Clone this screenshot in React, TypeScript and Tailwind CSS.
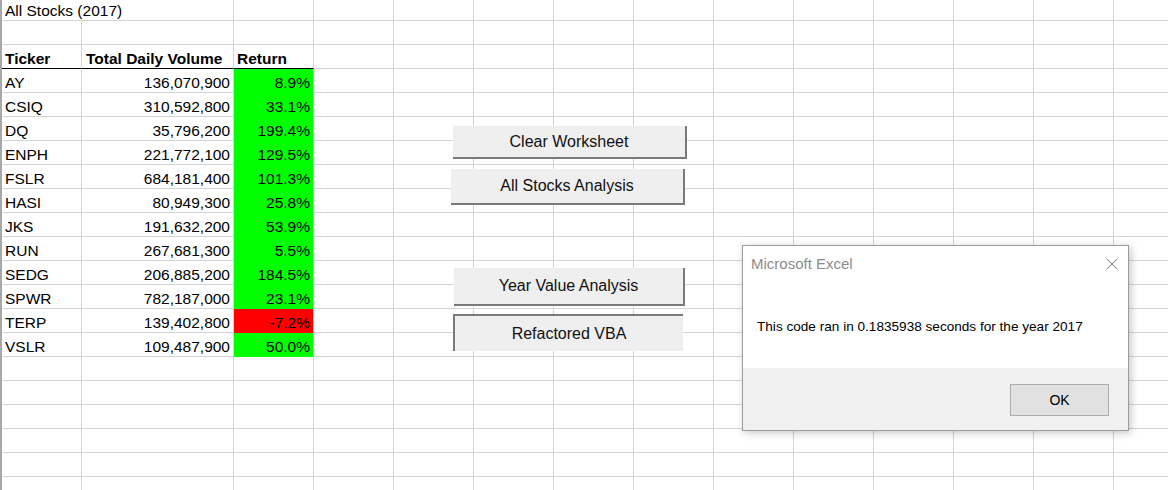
import React from 'react';

type Stock = {
    ticker: string;
    volume: string;
    ret: string;
    negative?: boolean;
};

const stocks: Stock[] = [
    { ticker: 'AY', volume: '136,070,900', ret: '8.9%' },
    { ticker: 'CSIQ', volume: '310,592,800', ret: '33.1%' },
    { ticker: 'DQ', volume: '35,796,200', ret: '199.4%' },
    { ticker: 'ENPH', volume: '221,772,100', ret: '129.5%' },
    { ticker: 'FSLR', volume: '684,181,400', ret: '101.3%' },
    { ticker: 'HASI', volume: '80,949,300', ret: '25.8%' },
    { ticker: 'JKS', volume: '191,632,200', ret: '53.9%' },
    { ticker: 'RUN', volume: '267,681,300', ret: '5.5%' },
    { ticker: 'SEDG', volume: '206,885,200', ret: '184.5%' },
    { ticker: 'SPWR', volume: '782,187,000', ret: '23.1%' },
    { ticker: 'TERP', volume: '139,402,800', ret: '-7.2%', negative: true },
    { ticker: 'VSLR', volume: '109,487,900', ret: '50.0%' },
];

// columns D.. to the right edge, all 80px wide
const emptyCols = Array.from({ length: 11 });
const emptyRows = Array.from({ length: 8 });

const cell = 'h-full shrink-0 border-r border-b border-[#d4d4d4] flex items-end leading-[18px]';

const EmptyCells = () => (
    <>
        {emptyCols.map((_, i) => (
            <div key={i} className={`${cell} w-[80px]`} />
        ))}
    </>
);

const SheetButton = ({ label, className }: { label: string; className: string }) => (
    <div
        className={`absolute flex items-center justify-center bg-[#efefef] text-[16px] leading-[18px] text-[#111] ${className}`}
    >
        {label}
    </div>
);

const App: React.FC = () => {
    return (
        <div
            className="relative w-[1168px] h-[490px] overflow-hidden bg-white text-black"
            style={{ fontFamily: '"Liberation Sans", Arial, sans-serif' }}
        >
            {/* worksheet */}
            <div className="flex flex-col border-l-2 border-[#a8a8a8] text-[15.5px]">
                {/* row 1: title spills over into column B */}
                <div className="flex h-[21px]">
                    <div className={`${cell} w-[232px] pl-[3px]`}>All Stocks (2017)</div>
                    <div className={`${cell} w-[80px]`} />
                    <EmptyCells />
                </div>

                {/* row 2 */}
                <div className="flex h-[24px]">
                    <div className={`${cell} w-[80px]`} />
                    <div className={`${cell} w-[152px]`} />
                    <div className={`${cell} w-[80px]`} />
                    <EmptyCells />
                </div>

                {/* header */}
                <div className="flex h-[24px] font-bold">
                    <div className={`${cell} w-[80px] pl-[3px] !border-b-black`}>Ticker</div>
                    <div className={`${cell} w-[152px] pl-[4px] !border-b-black`}>Total Daily Volume</div>
                    <div className={`${cell} w-[80px] pl-[3px] !border-b-black`}>Return</div>
                    <EmptyCells />
                </div>

                {stocks.map((s) => (
                    <div key={s.ticker} className="flex h-[24px]">
                        <div className={`${cell} w-[80px] pl-[3px]`}>{s.ticker}</div>
                        <div className={`${cell} w-[152px] justify-end pr-[3px]`}>{s.volume}</div>
                        <div
                            className={`${cell} w-[80px] justify-end pr-[3px] ${
                                s.negative ? 'bg-[#ff0000] !border-b-[#ff0000]' : 'bg-[#00ff00] !border-b-[#00ff00]'
                            }`}
                        >
                            {s.ret}
                        </div>
                        <EmptyCells />
                    </div>
                ))}

                {emptyRows.map((_, r) => (
                    <div key={r} className="flex h-[24px]">
                        <div className={`${cell} w-[80px]`} />
                        <div className={`${cell} w-[152px]`} />
                        <div className={`${cell} w-[80px]`} />
                        <EmptyCells />
                    </div>
                ))}
            </div>

            {/* form buttons sitting on the sheet */}
            <SheetButton
                label="Clear Worksheet"
                className="left-[453px] top-[126px] w-[234px] h-[33px] border-b-2 border-r-2 border-[#7a7a7a]"
            />
            <SheetButton
                label="All Stocks Analysis"
                className="left-[451px] top-[169px] w-[234px] h-[36px] border-b-2 border-r-2 border-[#7a7a7a]"
            />
            <SheetButton
                label="Year Value Analysis"
                className="left-[454px] top-[268px] w-[231px] h-[38px] border-b-2 border-r-2 border-[#7a7a7a]"
            />
            <SheetButton
                label="Refactored VBA"
                className="left-[453px] top-[314px] w-[230px] h-[37px] border-t-2 border-l-2 border-[#7a7a7a]"
            />

            {/* message box */}
            <div
                className="absolute left-[742px] top-[245px] w-[387px] h-[186px] flex flex-col bg-white border border-[#9c9c9c] shadow-[2px_2px_8px_rgba(0,0,0,0.22)]"
            >
                <div className="flex flex-col h-[122px]">
                    <div className="mt-[8px] flex h-[20px] items-center justify-between pl-[8px] pr-[10px]">
                        <span className="text-[15px] leading-[20px] text-[#8c8c8c]">Microsoft Excel</span>
                        <svg width="12" height="12" viewBox="0 0 12 12" className="text-[#7a7a7a]">
                            <path d="M0.5 0.5 L11.5 11.5 M11.5 0.5 L0.5 11.5" stroke="currentColor" strokeWidth="1" fill="none" />
                        </svg>
                    </div>
                    <div className="mt-[44px] pl-[14px] text-[13.6px] leading-[18px] text-black">
                        This code ran in 0.1835938 seconds for the year 2017
                    </div>
                </div>
                <div className="flex flex-1 items-start justify-end bg-[#f0f0f0] pt-[16px] pr-[19px]">
                    <div className="flex h-[32px] w-[99px] items-center justify-center border border-[#adadad] bg-[#e1e1e1] text-[14px] text-black">
                        OK
                    </div>
                </div>
            </div>
        </div>
    );
};

export default App;
